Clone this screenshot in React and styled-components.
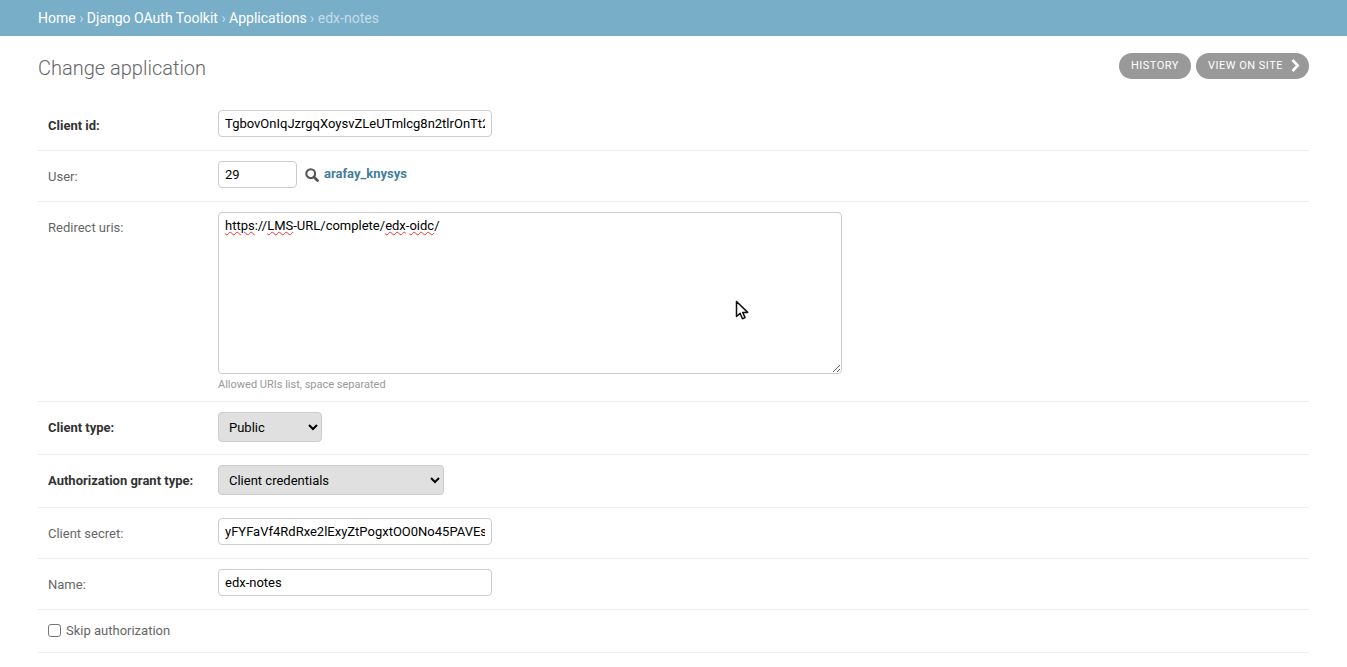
import React from "react";
import styled, { createGlobalStyle } from "styled-components";

const Global = createGlobalStyle`
  html, body { margin: 0; padding: 0; height: 667px; overflow: hidden; background: #fff; }
  body { font-family: Roboto, "Lucida Grande", Verdana, Arial, sans-serif; font-size: 14px; color: #333; }
  * { box-sizing: border-box; }
`;

const Breadcrumbs = styled.nav`
  height: 36px;
  background: #79aec8;
  padding: 0 38px;
  display: flex;
  align-items: center;
  font-size: 14px;
  color: #c4dce8;
  white-space: pre;
`;
const Crumb = styled.a`
  color: #fff;
`;
const Content = styled.main`
  padding: 20px 38px 0;
  position: relative;
`;
const Header = styled.div`
  display: flex;
  justify-content: space-between;
  align-items: flex-start;
  height: 44px;
`;
const Title = styled.h1`
  margin: 0;
  font-size: 20px;
  line-height: 24px;
  font-weight: 300;
  color: #666;
`;
const Tools = styled.div`
  display: flex;
  gap: 5px;
  margin-top: -3px;
`;
const Tool = styled.a`
  display: flex;
  align-items: center;
  height: 26px;
  padding: 0 ${(p) => p.$right || "12px"} 2px 12px;
  border-radius: 15px;
  background: #999;
  color: #fff;
  font-size: 11px;
  letter-spacing: 0.5px;
  text-transform: uppercase;
  gap: 8px;
`;
const Row = styled.div`
  display: flex;
  align-items: flex-start;
  padding: ${(p) => p.$pad || "10px 10px 13px"};
  border-bottom: 1px solid #eee;
  font-size: 13px;
`;
const Label = styled.label`
  width: 170px;
  flex: none;
  padding-top: 8px;
  line-height: 16px;
  color: ${(p) => (p.$required ? "#333" : "#666")};
  font-weight: ${(p) => (p.$required ? 700 : 400)};
`;
const TextInput = styled.input`
  display: block;
  width: ${(p) => p.$width || "274px"};
  height: 27px;
  padding: 0 6px;
  border: 1px solid #ccc;
  border-radius: 4px;
  background: #fff;
  color: #000;
  font: 13px/16px Roboto, sans-serif;
  outline: none;
`;
const UserCell = styled.div`
  display: flex;
  align-items: flex-start;
`;
const Lookup = styled.span`
  display: flex;
  width: 14px;
  height: 14px;
  margin: 7px 0 0 8px;
  color: #555;
`;
const UserName = styled.a`
  margin: 5px 0 0 5px;
  font-weight: 700;
  font-size: 13px;
  line-height: 16px;
  color: #447e9b;
`;
const AreaCell = styled.div`
  display: flex;
  flex-direction: column;
`;
const Area = styled.div`
  width: 624px;
  height: 162px;
  padding: 5px 6px;
  border: 1px solid #ccc;
  border-radius: 4px;
  color: #000;
  font-size: 13px;
  line-height: 16px;
  overflow: auto;
  resize: both;
`;
const Misspelled = styled.span`
  text-decoration: underline wavy #e33;
  text-decoration-thickness: 1px;
  text-underline-offset: 1px;
`;
const Help = styled.div`
  margin-top: 4px;
  font-size: 11px;
  line-height: 13px;
  color: #999;
`;
const Select = styled.select`
  display: block;
  width: ${(p) => p.$width};
  height: 30px;
  padding: 0 6px;
  border: 1px solid #ccc;
  border-radius: 4px;
  background: #e0e0e0;
  color: #000;
  font: 13px Roboto, sans-serif;
  outline: none;
`;
const CheckLabel = styled.label`
  display: flex;
  align-items: center;
  color: #666;
  line-height: 16px;
`;
const Check = styled.input`
  appearance: none;
  width: 13px;
  height: 13px;
  margin: -2px 5px 0 0;
  border: 1px solid #767676;
  border-radius: 3px;
  background: #fff;
`;
const Cursor = styled.svg`
  position: absolute;
  left: 735px;
  top: 264px;
  width: 15px;
  height: 21px;
`;

export default function App() {
  return (
    <>
      <Global />
      <Breadcrumbs>
        <Crumb>Home</Crumb>{" › "}<Crumb>Django OAuth Toolkit</Crumb>{" › "}<Crumb>Applications</Crumb>{" › edx-notes"}
      </Breadcrumbs>
      <Content>
        <Header>
          <Title>Change application</Title>
          <Tools>
            <Tool>History</Tool>
            <Tool $right="9px">
              View on site
              <svg width="9" height="13" viewBox="0 0 9 13" fill="none" stroke="#fff" strokeWidth="2.6">
                <path d="M1.5 1l5.2 5.5L1.5 12" />
              </svg>
            </Tool>
          </Tools>
        </Header>
        <Row>
          <Label $required>Client id:</Label>
          <TextInput readOnly spellCheck={false} value="TgbovOnIqJzrgqXoysvZLeUTmlcg8n2tlrOnTt2xKq9sPzWb" />
        </Row>
        <Row>
          <Label>User:</Label>
          <UserCell>
            <TextInput $width="79px" readOnly value="29" />
            <Lookup>
              <svg width="14" height="14" viewBox="0 0 14 14" fill="none" stroke="currentColor">
                <circle cx="5.7" cy="5.7" r="4.4" strokeWidth="2.1" />
                <path d="M8.9 8.9l3.6 3.6" strokeWidth="2.8" strokeLinecap="round" />
              </svg>
            </Lookup>
            <UserName>arafay_knysys</UserName>
          </UserCell>
        </Row>
        <Row $pad="10px">
          <Label>Redirect uris:</Label>
          <AreaCell>
            <Area>
              <Misspelled>https</Misspelled>://<Misspelled>LMS</Misspelled>-URL/complete/<Misspelled>edx</Misspelled>-<Misspelled>oidc</Misspelled>/
            </Area>
            <Help>Allowed URIs list, space separated</Help>
          </AreaCell>
        </Row>
        <Row $pad="10px 10px 12px">
          <Label $required>Client type:</Label>
          <Select $width="104px" defaultValue="Public">
            <option>Public</option>
            <option>Confidential</option>
          </Select>
        </Row>
        <Row $pad="10px 10px 12px">
          <Label $required>Authorization grant type:</Label>
          <Select $width="226px" defaultValue="Client credentials">
            <option>Client credentials</option>
            <option>Authorization code</option>
          </Select>
        </Row>
        <Row>
          <Label>Client secret:</Label>
          <TextInput readOnly spellCheck={false} value="yFYFaVf4RdRxe2lExyZtPogxtOO0No45PAVEsTq8mWcLd" />
        </Row>
        <Row>
          <Label>Name:</Label>
          <TextInput readOnly value="edx-notes" />
        </Row>
        <Row $pad="13px 10px">
          <CheckLabel>
            <Check type="checkbox" />
            Skip authorization
          </CheckLabel>
        </Row>
        <Cursor viewBox="0 0 15 21">
          <path d="M1.5 1.5v15l3.6-3.2 2.4 5.4 2.6-1.1-2.4-5.2h5z" fill="#fff" stroke="#111" strokeWidth="1.5" strokeLinejoin="round" />
        </Cursor>
      </Content>
    </>
  );
}
